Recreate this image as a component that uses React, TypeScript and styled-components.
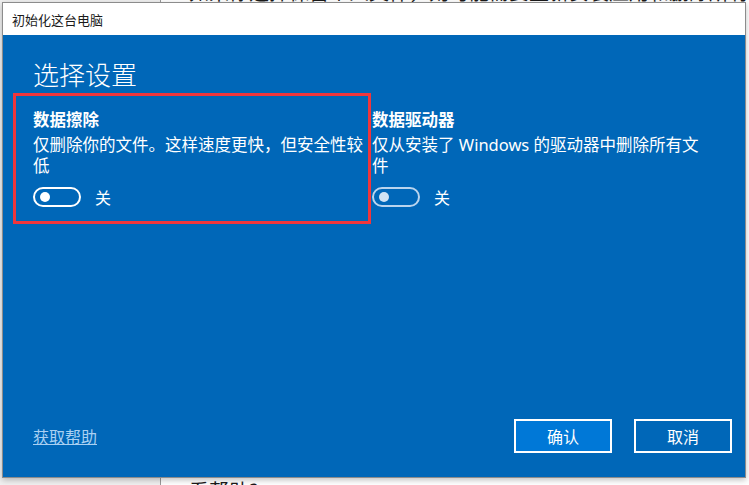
import React, { useState } from 'react';
import styled, { createGlobalStyle } from 'styled-components';

const GlobalStyle = createGlobalStyle`
	html, body {
		margin: 0;
		padding: 0;
		background: #ffffff;
	}
	body {
		font-family: 'Noto Sans', 'Noto Sans CJK SC', sans-serif;
	}
`;

const Desktop = styled.div`
	position: relative;
	width: 749px;
	height: 485px;
	overflow: hidden;
	display: grid;
	grid-template-columns: 161px 1fr;
`;

const Sidebar = styled.div`
	background: #f0f0f0;
	border-right: 1px solid #9a9a9a;
`;

const DocPane = styled.div`
	background: #ffffff;
	display: flex;
	flex-direction: column;
	justify-content: space-between;
	padding-left: 28px;
	font-family: 'Noto Sans CJK SC', sans-serif;
	font-size: 20px;
	line-height: 24px;
	color: #1a1a1a;
`;

const DocLine = styled.div<{ $edge: 'top' | 'bottom' }>`
	white-space: nowrap;
	${(p) => (p.$edge === 'top' ? 'margin-top: -20px;' : 'margin-bottom: -18px;')}
`;

const Window = styled.div`
	position: absolute;
	top: 2px;
	left: 2px;
	width: 744px;
	height: 476px;
	box-sizing: border-box;
	border: 1px solid #8c8c8c;
	box-shadow: 0 2px 6px rgba(0, 0, 0, 0.25);
	display: flex;
	flex-direction: column;
`;

const TitleBar = styled.div`
	height: 32px;
	flex-shrink: 0;
	background: #ffffff;
	display: flex;
	align-items: center;
	padding-left: 9px;
	font-family: 'Noto Sans CJK SC', sans-serif;
	font-size: 13px;
	color: #1a1a1a;
`;

const Body = styled.div`
	flex: 1;
	background: #0067b8;
	color: #ffffff;
	display: flex;
	flex-direction: column;
	padding: 22px 13px 24px 30px;
	font-family: 'Noto Sans', 'Noto Sans CJK SC', sans-serif;
`;

const Heading = styled.h1`
	margin: 0;
	font-family: 'Noto Sans CJK SC', sans-serif;
	font-size: 26px;
	line-height: 34px;
	font-weight: 300;
`;

const Options = styled.div`
	display: grid;
	grid-template-columns: 336px 336px;
	column-gap: 3px;
	margin-top: 18px;
`;

const Option = styled.div<{ $highlight?: boolean }>`
	position: relative;
	${(p) =>
		p.$highlight &&
		`
  &::before {
    content: '';
    position: absolute;
    top: -16px;
    left: -20px;
    right: -2px;
    bottom: -17px;
    border: 3px solid #f0363c;
    pointer-events: none;
  }
  `}
`;

const OptionTitle = styled.div`
	font-size: 16.5px;
	line-height: 22px;
	font-weight: 700;
`;

const OptionDesc = styled.div`
	margin-top: 3px;
	font-size: 16.5px;
	line-height: 21px;
`;

const ToggleRow = styled.label`
	margin-top: 11px;
	display: flex;
	align-items: center;
	gap: 14px;
	height: 20px;
	font-family: 'Noto Sans CJK SC', sans-serif;
	font-size: 16px;
	cursor: pointer;
`;

const Track = styled.span<{ $dim?: boolean; $on: boolean }>`
	width: 48px;
	height: 20px;
	box-sizing: border-box;
	border-radius: 10px;
	border: 2px solid ${(p) => (p.$dim ? '#b9d4ee' : '#ffffff')};
	display: flex;
	align-items: center;
	justify-content: ${(p) => (p.$on ? 'flex-end' : 'flex-start')};
	padding: 0 3px;
`;

const Knob = styled.span<{ $dim?: boolean }>`
	width: 10px;
	height: 10px;
	border-radius: 50%;
	background: ${(p) => (p.$dim ? '#cfe3f5' : '#ffffff')};
	margin-left: 2px;
`;

const Footer = styled.div`
	margin-top: auto;
	display: flex;
	align-items: center;
	justify-content: space-between;
`;

const HelpLink = styled.a`
	color: #a9d0f2;
	text-decoration: underline;
	font-family: 'Noto Sans CJK SC', sans-serif;
	font-size: 16px;
	cursor: pointer;
`;

const Buttons = styled.div`
	display: flex;
	gap: 22px;
`;

const Button = styled.button<{ $primary?: boolean }>`
	width: 98px;
	height: 34px;
	box-sizing: border-box;
	border: 2px solid #ffffff;
	background: ${(p) => (p.$primary ? '#0078d7' : '#0067b8')};
	color: #ffffff;
	font-family: 'Noto Sans CJK SC', sans-serif;
	font-size: 16px;
	padding: 0;
	cursor: pointer;
`;

const Toggle = ({ dim }: { dim?: boolean }) => {
	const [on, setOn] = useState(false);
	return (
		<ToggleRow onClick={() => setOn(!on)}>
			<Track $dim={dim} $on={on}>
				<Knob $dim={dim} />
			</Track>
			{on ? '开' : '关'}
		</ToggleRow>
	);
};

export default function App() {
	return (
		<>
			<GlobalStyle />
			<Desktop>
				<Sidebar />
				<DocPane>
					<DocLine $edge="top">如果你选择保留个人文件，则可能需要重新安装应用和删除所有内容</DocLine>
					<DocLine $edge="bottom">看帮助?</DocLine>
				</DocPane>
				<Window>
					<TitleBar>初始化这台电脑</TitleBar>
					<Body>
						<Heading>选择设置</Heading>
						<Options>
							<Option $highlight>
								<OptionTitle>数据擦除</OptionTitle>
								<OptionDesc>仅删除你的文件。这样速度更快，但安全性较低</OptionDesc>
								<Toggle />
							</Option>
							<Option>
								<OptionTitle>数据驱动器</OptionTitle>
								<OptionDesc>仅从安装了 Windows 的驱动器中删除所有文件</OptionDesc>
								<Toggle dim />
							</Option>
						</Options>
						<Footer>
							<HelpLink>获取帮助</HelpLink>
							<Buttons>
								<Button $primary>确认</Button>
								<Button>取消</Button>
							</Buttons>
						</Footer>
					</Body>
				</Window>
			</Desktop>
		</>
	);
}
